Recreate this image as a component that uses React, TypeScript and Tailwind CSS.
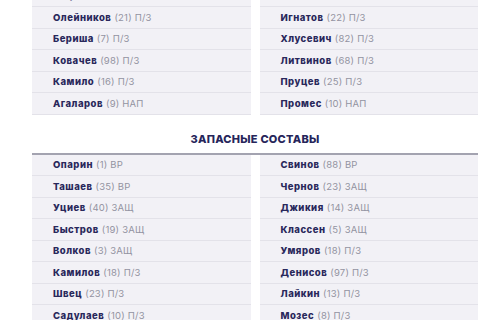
type Player = { name: string; num: number; pos: string };

const STARTERS: [Player[], Player[]] = [
  [
    { name: "Утциев", num: 14, pos: "П/З" },
    { name: "Олейников", num: 21, pos: "П/З" },
    { name: "Бериша", num: 7, pos: "П/З" },
    { name: "Ковачев", num: 98, pos: "П/З" },
    { name: "Камило", num: 16, pos: "П/З" },
    { name: "Агаларов", num: 9, pos: "НАП" },
  ],
  [
    { name: "Зобнин", num: 47, pos: "П/З" },
    { name: "Игнатов", num: 22, pos: "П/З" },
    { name: "Хлусевич", num: 82, pos: "П/З" },
    { name: "Литвинов", num: 68, pos: "П/З" },
    { name: "Пруцев", num: 25, pos: "П/З" },
    { name: "Промес", num: 10, pos: "НАП" },
  ],
];

const SUBS: [Player[], Player[]] = [
  [
    { name: "Опарин", num: 1, pos: "ВР" },
    { name: "Ташаев", num: 35, pos: "ВР" },
    { name: "Уциев", num: 40, pos: "ЗАЩ" },
    { name: "Быстров", num: 19, pos: "ЗАЩ" },
    { name: "Волков", num: 3, pos: "ЗАЩ" },
    { name: "Камилов", num: 18, pos: "П/З" },
    { name: "Швец", num: 23, pos: "П/З" },
    { name: "Садулаев", num: 10, pos: "П/З" },
  ],
  [
    { name: "Свинов", num: 88, pos: "ВР" },
    { name: "Чернов", num: 23, pos: "ЗАЩ" },
    { name: "Джикия", num: 14, pos: "ЗАЩ" },
    { name: "Классен", num: 5, pos: "ЗАЩ" },
    { name: "Умяров", num: 18, pos: "П/З" },
    { name: "Денисов", num: 97, pos: "П/З" },
    { name: "Лайкин", num: 13, pos: "П/З" },
    { name: "Мозес", num: 8, pos: "П/З" },
  ],
];

function PlayerRow({ p }: { p: Player }) {
  return (
    <li className="flex h-[21.5px] items-center border-b-[1.5px] border-[#e3e2e9] bg-[#f2f1f6] pl-[21px] text-[9.5px] leading-none">
      <span className="font-extrabold tracking-[0.5px] text-[#29285b]">{p.name}</span>
      <span className="ml-[3px] tracking-[0.2px] text-[#9393a1]">
        ({p.num}) {p.pos}
      </span>
    </li>
  );
}

function TeamColumns({ teams }: { teams: [Player[], Player[]] }) {
  return (
    <div className="grid grid-cols-2 gap-[9px]">
      {teams.map((list, i) => (
        <ul key={i}>
          {list.map((p) => (
            <PlayerRow key={p.name} p={p} />
          ))}
        </ul>
      ))}
    </div>
  );
}

export default function App() {
  return (
    <div
      className="h-[320px] w-[500px] overflow-hidden bg-white pl-[32px] pr-[22px]"
      style={{ fontFamily: "Inter, 'Noto Sans', sans-serif" }}
    >
      <div className="-mt-[14.5px]">
        <TeamColumns teams={STARTERS} />
      </div>

      <h2 className="border-b-2 border-[#a3a3b0] pt-[17px] pb-[7px] text-center text-[11px] leading-[14px] font-extrabold tracking-[0.25px] text-[#26255a]">
        ЗАПАСНЫЕ СОСТАВЫ
      </h2>

      <TeamColumns teams={SUBS} />
    </div>
  );
}
